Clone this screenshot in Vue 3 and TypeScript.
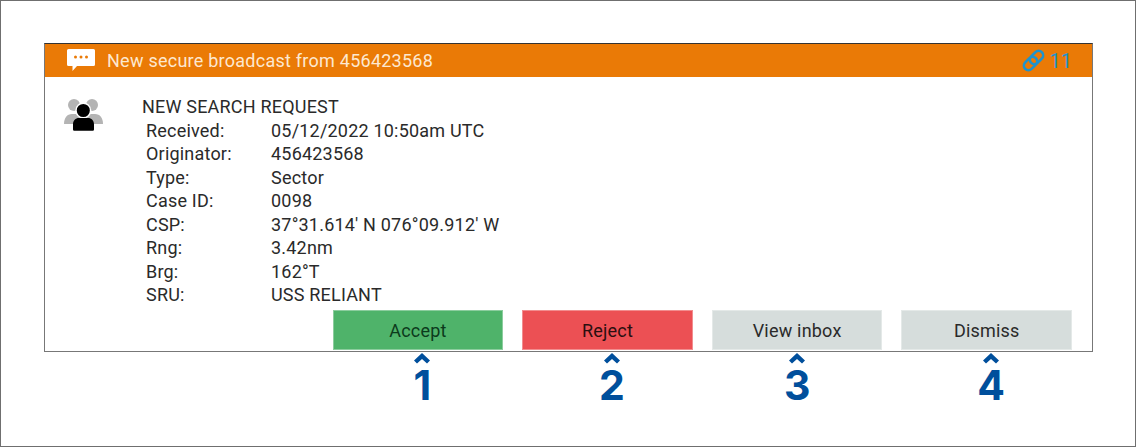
<script setup lang="ts">
const rows = [
  { label: 'Received:', value: '05/12/2022 10:50am UTC' },
  { label: 'Originator:', value: '456423568' },
  { label: 'Type:', value: 'Sector' },
  { label: 'Case ID:', value: '0098' },
  { label: 'CSP:', value: "37°31.614' N 076°09.912' W" },
  { label: 'Rng:', value: '3.42nm' },
  { label: 'Brg:', value: '162°T' },
  { label: 'SRU:', value: 'USS RELIANT' },
];

const actions = [
  { label: 'Accept', kind: 'accept', num: 1 },
  { label: 'Reject', kind: 'reject', num: 2 },
  { label: 'View inbox', kind: 'plain', num: 3 },
  { label: 'Dismiss', kind: 'plain', num: 4 },
];
</script>

<template>
  <div class="frame">
    <div class="panel">
      <div class="header">
        <svg class="chat-icon" width="28" height="22" viewBox="0 0 28 22">
          <path d="M1.500 0h25A1.500 1.500 0 0 1 28 1.500v14a1.500 1.500 0 0 1-1.500 1.500H10l-4.500 5v-5h-4A1.500 1.500 0 0 1 0 15.500v-14A1.500 1.500 0 0 1 1.500 0z" fill="#fff" />
          <circle cx="8.500" cy="8" r="1.500" fill="#ea7a06" />
          <circle cx="14" cy="8" r="1.500" fill="#ea7a06" />
          <circle cx="19.500" cy="8" r="1.500" fill="#ea7a06" />
        </svg>
        <span class="header-title">New secure broadcast from 456423568</span>
        <span class="link-count">
          <svg width="23" height="23" viewBox="0 0 23 23" fill="none" stroke="#1f93cc" stroke-width="2.600">
            <rect x="10" y="1" width="9" height="15" rx="4.500" transform="rotate(45 14.500 8.500)" />
            <rect x="4" y="7" width="9" height="15" rx="4.500" transform="rotate(45 8.500 14.500)" />
          </svg>
          <span>11</span>
        </span>
      </div>
      <div class="body">
        <svg class="people-icon" width="39" height="33" viewBox="0 0 39 33">
          <g fill="#b4b4b4">
            <circle cx="10" cy="7" r="6" />
            <circle cx="28" cy="7" r="6" />
            <path d="M0 26c0-6 3-10 8-10h23c5 0 8 4 8 10z" />
          </g>
          <circle cx="19.300" cy="12.500" r="7.300" fill="#000" stroke="#fff" stroke-width="1.500" />
          <path d="M9 31.500v-5c0-4 2.500-6.500 6-6.500h9c3.500 0 6 2.500 6 6.500v5a1.200 1.200 0 0 1-1.200 1.200H10.200A1.200 1.200 0 0 1 9 31.500z" fill="#000" />
        </svg>
        <div class="details">
          <div class="details-title">NEW SEARCH REQUEST</div>
          <div v-for="row in rows" :key="row.label" class="detail-row">
            <span class="detail-label">{{ row.label }}</span>
            <span>{{ row.value }}</span>
          </div>
        </div>
      </div>
      <div class="actions">
        <button v-for="a in actions" :key="a.num" class="action" :class="a.kind">{{ a.label }}</button>
      </div>
    </div>
    <div class="callouts">
      <div v-for="a in actions" :key="a.num" class="callout" :class="{ nudged: a.num !== 3 }">
        <svg width="18" height="12" viewBox="0 0 18 12"><path d="M9 0l8 7.500-3 3L9 6 4 10.500l-3-3z" fill="#004f9c" /></svg>
        <span class="callout-num">{{ a.num }}</span>
      </div>
    </div>
  </div>
</template>

<style>
html, body {
  margin: 0;
  background: #fff;
}
</style>

<style scoped>
.frame {
  box-sizing: border-box;
  width: 1136px;
  height: 447px;
  border: 1px solid #6f6f6f;
  padding: 42px 0 0 43px;
  font-family: Roboto, sans-serif;
  color: #2a2a2a;
}

.panel {
  box-sizing: border-box;
  width: 1049px;
  height: 309px;
  border: 1px solid #777;
  border-top-color: #333;
  display: flex;
  flex-direction: column;
}

.header {
  height: 33px;
  flex: none;
  background: #ea7a06;
  color: #fde8d0;
  display: flex;
  align-items: center;
  padding: 0 20px 0 22px;
  font-size: 18px;
  letter-spacing: 0.25px;
}

.chat-icon {
  margin-right: 12px;
  margin-top: -2px;
}

.header-title {
  margin-top: -1px;
}

.link-count {
  margin-left: auto;
  display: flex;
  align-items: center;
  gap: 5px;
  font-size: 20px;
  letter-spacing: 0;
  color: #1f93cc;
}

.body {
  flex: 1;
  display: flex;
  padding: 18px 0 0 19px;
}

.people-icon {
  margin-top: 3px;
}

.details {
  margin-left: 39px;
  font-size: 18px;
  line-height: 23.5px;
  letter-spacing: 0.2px;
}

.detail-row {
  display: flex;
  padding-left: 4px;
}

.detail-label {
  width: 125px;
}

.actions {
  display: flex;
  justify-content: flex-end;
  gap: 19px;
  padding: 0 20px 1px 0;
}

.action {
  width: 170.6px;
  height: 40px;
  border: 1px solid rgba(255, 255, 255, 0.35);
  font-family: Roboto, sans-serif;
  font-size: 18px;
  letter-spacing: 0.2px;
  padding: 0;
  color: #2a2a2a;
}

.accept {
  background: #4fb36a;
  color: #0c3a1c;
}

.reject {
  background: #ec5054;
  color: #2a0f10;
}

.plain {
  background: #d6dddc;
}

.callouts {
  display: flex;
  width: 1048px;
  box-sizing: border-box;
  justify-content: flex-end;
  gap: 19px;
  padding-right: 20px;
}

.callout {
  box-sizing: border-box;
  width: 170.6px;
  display: flex;
  flex-direction: column;
  align-items: center;
}

.callout.nudged {
  padding-left: 9px;
}

.callout svg {
  margin-top: 1px;
}

.callout-num {
  font-family: Inter, sans-serif;
  font-weight: 700;
  font-size: 41px;
  line-height: 41px;
  color: #004f9c;
}
</style>
